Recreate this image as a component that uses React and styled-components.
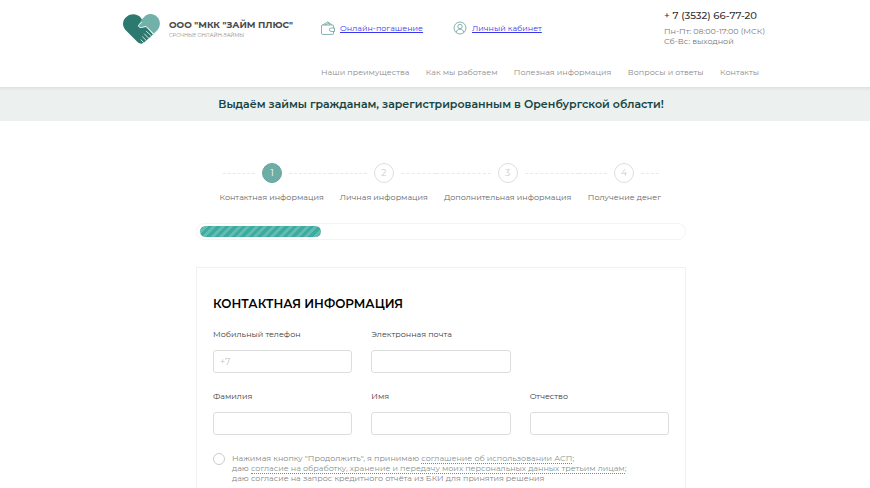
import React from 'react'
import styled, { createGlobalStyle } from 'styled-components'

const GlobalStyle = createGlobalStyle`
  * {
    box-sizing: border-box;
  }
  body {
    margin: 0;
    background-color: white;
    color: #4c4f4f;
    font-family: Montserrat, Inter, 'Open Sans', sans-serif;
    font-size: 8px;
    line-height: 10px;
  }
`
const Page = styled.div`
  display: flex;
  flex-direction: column;
  min-height: 100vh;
`
const HeaderContainer = styled.header`
  display: flex;
  justify-content: center;
  height: 87px;
  padding-left: 12px;
  .inner {
    display: grid;
    grid-template-columns: 198px 1fr;
    grid-template-rows: 56px 31px;
    width: 100%;
    max-width: 636px;
  }
`
const Logo = styled.a`
  display: flex;
  align-items: center;
  gap: 9px;
  padding-top: 2px;
  color: #4a4a4a;
  text-decoration: none;
  white-space: nowrap;
  svg {
    flex: none;
    width: 37px;
    height: 30px;
  }
  .name {
    display: block;
    font-size: 9px;
    font-weight: 700;
    line-height: 12px;
  }
  .slogan {
    display: block;
    color: #888;
    font-size: 5px;
    line-height: 8px;
  }
`
const TopLinks = styled.div`
  display: grid;
  grid-template-columns: 132px 1fr 95px;
`
const IconLink = styled.a`
  display: flex;
  align-items: center;
  gap: 5px;
  color: #3a35ee;
  white-space: nowrap;
  svg {
    flex: none;
    width: 14px;
    height: 14px;
  }
`
const Contacts = styled.address`
  padding-top: 9px;
  color: #777;
  font-style: normal;
  white-space: nowrap;
  .phone {
    display: block;
    margin-bottom: 3px;
    color: #333;
    font-size: 10px;
    font-weight: 500;
    line-height: 14px;
    text-decoration: none;
  }
`
const Nav = styled.nav`
  grid-column: 2;
  display: flex;
  align-items: center;
  justify-content: space-between;
  a {
    color: #8c8c8c;
    text-decoration: none;
    white-space: nowrap;
  }
`
const Banner = styled.div`
  padding: 9px 0 9px 12px;
  background: linear-gradient(#dde2e1, #ecf0ef 4px);
  color: #164542;
  font-size: 11px;
  font-weight: 600;
  line-height: 16px;
  text-align: center;
`
const Main = styled.main`
  flex: 1;
  display: flex;
  flex-direction: column;
  align-items: center;
  padding: 42px 0 0 12px;
`
const StepList = styled.ol`
  display: grid;
  grid-template-columns: 108fr 105fr 142fr 80fr;
  width: 100%;
  max-width: 436px;
  margin: 0 0 21px;
  padding: 0;
  list-style: none;
`
const Step = styled.li`
  min-width: 0;
  color: #666;
  .marker {
    display: flex;
    align-items: center;
    gap: 7px;
    margin-bottom: 9px;
  }
  .marker::before,
  .marker::after {
    content: '';
    flex: 1;
    border-top: 1px dashed #e9e9e9;
  }
  .label {
    display: flex;
    justify-content: center;
    white-space: nowrap;
  }
  &:not(:first-child) .label {
    padding-left: 11px;
  }
  &:not(:last-child) .label {
    padding-right: 11px;
  }
  &:first-child .marker::before {
    flex: none;
    width: 32px;
  }
  &:last-child .marker::after {
    flex: none;
    width: 18px;
  }
`
const StepNumber = styled.span`
  display: flex;
  align-items: center;
  justify-content: center;
  width: 20px;
  height: 20px;
  border: 1px solid ${({ $active }) => ($active ? '#66a79e' : '#dedede')};
  border-radius: 50%;
  background-color: ${({ $active }) => ($active ? '#6dada5' : 'white')};
  color: ${({ $active }) => ($active ? 'white' : '#ccc')};
  font-size: 9px;
`
const Progress = styled.div`
  width: 100%;
  max-width: 490px;
  height: 17px;
  margin-bottom: 27px;
  padding: 2px 3px;
  border: 1px solid #f3f3f3;
  border-radius: 9px;
  .bar {
    height: 11px;
    border-radius: 6px;
    background: repeating-linear-gradient(
      135deg,
      #3aaca0 0 3px,
      #66bbb1 3px 6px
    );
  }
`
const Form = styled.form`
  flex: 1;
  width: 100%;
  max-width: 490px;
  padding: 28px 16px 5px;
  border: 1px solid #f1f1f1;
  border-bottom: none;
  h1 {
    margin: 0 0 17px;
    color: black;
    font-size: 12px;
    font-weight: 600;
    line-height: 16px;
    text-transform: uppercase;
  }
`
const Fields = styled.div`
  display: grid;
  grid-template-columns: repeat(3, 1fr);
  gap: 18px 19px;
  margin-bottom: 18px;
`
const Field = styled.div`
  label {
    display: block;
    margin-bottom: 11px;
    color: #3c3c3c;
    line-height: 10px;
  }
  input {
    display: block;
    width: 100%;
    height: 23px;
    padding: 0 6px;
    border: 1px solid #ddd;
    border-radius: 3px;
    color: #4d4d4d;
    font-family: inherit;
    font-size: 9px;
  }
  input::placeholder {
    color: #c4c4c4;
  }
`
const Agreement = styled.div`
  display: flex;
  gap: 7px;
  color: #868686;
  line-height: 10px;
  input {
    appearance: none;
    flex: none;
    width: 12px;
    height: 12px;
    margin: 0;
    border: 1px solid #ccc;
    border-radius: 50%;
  }
  input:checked {
    background-color: #6dada5;
  }
  label {
    white-space: nowrap;
  }
  a {
    border-bottom: 1px dotted #5e958e;
    color: #7f9693;
    text-decoration: none;
  }
`

const HeartLogo = () => (
  <svg viewBox="0 0 37 30" fill="none" aria-hidden="true">
    <path
      d="M18 4C15 0 8-1 4 2.500C-1 6-1 12 2.500 16L15 28.500C17 30 19.500 30 21 28.500L30 20.500L22 11Z"
      fill="#2d786f"
    />
    <path
      d="M16 10.500C18 6 21 3 23 1.300C27-.8 31-.2 34 2.800C38 6.800 37.500 12.500 34.500 16L30.500 20L23.500 12.500L19.500 13.300C16.500 13.800 15 12 16 10.500Z"
      fill="#72b1a9"
    />
    <path
      d="M18.500 8.500L15.800 10.800C14.800 12.300 16.500 14 18.500 13.500L23 12.500L30.500 20"
      stroke="white"
      strokeWidth=".9"
      strokeLinecap="round"
      strokeLinejoin="round"
    />
    <path
      d="M23.500 17.500L28 21.500M21.500 20L25.500 24M19.500 22.800L23 26.200M18 25.800L20.500 28.500"
      stroke="white"
      strokeWidth=".8"
      strokeLinecap="round"
    />
  </svg>
)

const WalletIcon = () => (
  <svg
    viewBox="0 0 14 14"
    fill="none"
    stroke="#679e98"
    strokeWidth=".8"
    strokeLinejoin="round"
    aria-hidden="true"
  >
    <path d="M12.500 7V4.800Q12.500 4 11.700 4H1.500Q.5 4 .5 5V12.400Q.5 13.400 1.500 13.400H11.700Q12.500 13.400 12.500 12.600V10.500" />
    <path d="M13.500 7H10.200A1.700 1.700 0 0 0 10.200 10.500H13.500Z" />
    <path d="M1.500 4L7 .8L9 4M4 4L8.500 1.800L10.700 4" />
  </svg>
)

const UserIcon = () => (
  <svg
    viewBox="0 0 14 14"
    fill="none"
    stroke="#679e98"
    strokeWidth=".8"
    aria-hidden="true"
  >
    <circle cx="7" cy="7" r="6" />
    <circle cx="7" cy="5.500" r="2.200" />
    <path d="M3.300 11.500C3.500 7 10.500 7 10.700 11.500" />
  </svg>
)

const navItems = [
  'Наши преимущества',
  'Как мы работаем',
  'Полезная информация',
  'Вопросы и ответы',
  'Контакты',
]

const steps = [
  'Контактная информация',
  'Личная информация',
  'Дополнительная информация',
  'Получение денег',
]

const contactFields = [
  { id: 'phone', label: 'Мобильный телефон', type: 'tel', placeholder: '+7' },
  { id: 'email', label: 'Электронная почта', type: 'email' },
]

const nameFields = [
  { id: 'lastName', label: 'Фамилия', type: 'text' },
  { id: 'firstName', label: 'Имя', type: 'text' },
  { id: 'middleName', label: 'Отчество', type: 'text' },
]

const FieldRow = ({ fields }) => (
  <Fields>
    {fields.map(({ id, label, type, placeholder }) => (
      <Field key={id}>
        <label htmlFor={id}>{label}</label>
        <input id={id} name={id} type={type} placeholder={placeholder} />
      </Field>
    ))}
  </Fields>
)

const Header = () => (
  <HeaderContainer>
    <div className="inner">
      <Logo href="#">
        <HeartLogo />
        <span>
          <span className="name">ООО "МКК "ЗАЙМ ПЛЮС"</span>
          <span className="slogan">СРОЧНЫЕ ОНЛАЙН-ЗАЙМЫ</span>
        </span>
      </Logo>
      <TopLinks>
        <IconLink href="#">
          <WalletIcon />
          Онлайн-погашение
        </IconLink>
        <IconLink href="#">
          <UserIcon />
          Личный кабинет
        </IconLink>
        <Contacts>
          <a className="phone" href="tel:+73532667720">
            + 7 (3532) 66-77-20
          </a>
          Пн-Пт: 08:00-17:00 (МСК)
          <br />
          Сб-Вс: выходной
        </Contacts>
      </TopLinks>
      <Nav>
        {navItems.map((item) => (
          <a key={item} href="#">
            {item}
          </a>
        ))}
      </Nav>
    </div>
  </HeaderContainer>
)

const App = () => {
  const currentStep = 0
  return (
    <Page>
      <GlobalStyle />
      <Header />
      <Banner>
        Выдаём займы гражданам, зарегистрированным в Оренбургской области!
      </Banner>
      <Main>
        <StepList>
          {steps.map((step, index) => (
            <Step key={step}>
              <div className="marker">
                <StepNumber $active={index === currentStep}>
                  {index + 1}
                </StepNumber>
              </div>
              <span className="label">{step}</span>
            </Step>
          ))}
        </StepList>
        <Progress>
          <div
            className="bar"
            style={{ width: `${((currentStep + 1) / steps.length) * 100}%` }}
          />
        </Progress>
        <Form>
          <h1>Контактная информация</h1>
          <FieldRow fields={contactFields} />
          <FieldRow fields={nameFields} />
          <Agreement>
            <input id="agreement" name="agreement" type="checkbox" />
            <label htmlFor="agreement">
              Нажимая кнопку "Продолжить", я принимаю{' '}
              <a href="#">соглашение об использовании АСП</a>;
              <br />
              даю{' '}
              <a href="#">
                согласие на обработку, хранение и передачу моих персональных
                данных третьим лицам
              </a>
              ;
              <br />
              даю согласие на запрос кредитного отчёта из БКИ для принятия
              решения
            </label>
          </Agreement>
        </Form>
      </Main>
    </Page>
  )
}

export default App
